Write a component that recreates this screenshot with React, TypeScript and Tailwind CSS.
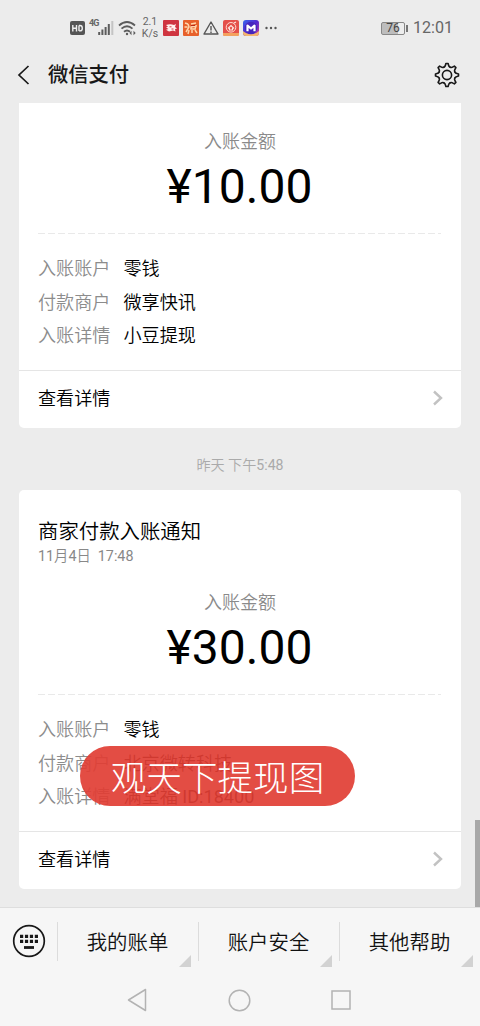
import React from "react";

type Row = { label: string; value: string; code?: string };

function StatusBar() {
  return (
    <div className="flex h-[52px] shrink-0 items-center pl-[70px] pr-[27px] text-[#666]">
      <svg className="mt-1 h-[14px] w-[15px]" viewBox="0 0 15 14">
        <rect width="15" height="14" rx="2" fill="#555" />
        <path d="M2.800 4v6.500M2.800 7.200h3.700M6.500 4v6.500M9 4.500v5.400M9 4.500h1q2.300 0 2.300 2.700t-2.300 2.700H9" fill="none" stroke="#eee" strokeWidth="1.400" />
      </svg>
      <span className="mb-[5px] ml-[4px] w-[9px] text-[9px] font-bold leading-none tracking-[-0.8px]">4G</span>
      <svg className="mt-1 h-[16px] w-[16px]" viewBox="0 0 16 16">
        <path d="M1.200 15v-3M4.400 15V9.500M7.600 15V7M10.800 15V4" stroke="#5c5c5c" strokeWidth="2" />
        <path d="M14.300 15V1" stroke="#c4c4c4" strokeWidth="2" />
      </svg>
      <svg className="ml-[4px] mt-1 h-[16px] w-[20px]" viewBox="0 0 20 16" fill="none" stroke="#5c5c5c" strokeWidth="1.800">
        <path d="M1 5.500q8-7 16 0M3.500 8.700q5.500-5 11 0M6 11.800q3-2.600 6 0" />
        <circle cx="9" cy="14" r="1.200" fill="#5c5c5c" stroke="none" />
        <path d="M13.500 10.800l-2 2.200 2 2.200zM15.500 10.800l2.200 2.200-2.200 2.200z" fill="#5c5c5c" stroke="none" />
      </svg>
      <div className="ml-[3px] mt-[3px] w-[18px] whitespace-nowrap text-center text-[10.5px] leading-[12px]">
        <div>2.1</div>
        <div>K/s</div>
      </div>
      <svg className="ml-[4px] mt-1 h-[16px] w-[16px]" viewBox="0 0 16 16">
        <rect width="16" height="16" rx="1" fill="#cf3540" />
        <path d="M3 5q4-1.500 8 0l2-1-1 3 2 1.500-2 .5.500 2.500-2.500-1-4 1L3 9.800l2.500-.8L3 7.500l2-.8z" fill="#fff1ed" />
        <path d="M6.500 6.800h2M8.500 9h2" stroke="#cf3540" />
      </svg>
      <svg className="ml-[4px] mt-1 h-[16px] w-[16px]" viewBox="0 0 16 16">
        <rect width="16" height="16" rx="1" fill="#e7602b" />
        <path d="M2 3l3 1M1.500 7h3M5 4l1 3-3 5M8 4l5-1M8 7l5-1-1 3H8zM6 10l-1 4M9 10v3M12 10l2 3" fill="none" stroke="#ffd5aa" strokeWidth="1.500" />
        <path d="M8 5.500h4" stroke="#b52b19" />
      </svg>
      <svg className="ml-[4px] mt-1 h-[16px] w-[16px]" viewBox="0 0 16 16" fill="none" stroke="#555" strokeWidth="1.400" strokeLinejoin="round">
        <path d="M8 2L15 14H1zM8 6v4.500M8 11.500V13" />
      </svg>
      <svg className="ml-[4px] mt-1 h-[16px] w-[16px]" viewBox="0 0 16 16">
        <rect width="16" height="16" rx="2" fill="#e4504b" />
        <path d="M0 13h16v1.500q0 1.500-1.500 1.500h-13Q0 16 0 14.500z" fill="#f3a15e" />
        <circle cx="8" cy="7.300" r="4.800" fill="none" stroke="#ffd9d0" strokeWidth="1" />
        <path d="M5 8.500l3-3 3 3M6.500 8v2h3V8M11 3l2-1" fill="none" stroke="#ffe8e2" strokeWidth="1.100" />
      </svg>
      <svg className="ml-[4px] mt-1 h-[16px] w-[16px]" viewBox="0 0 16 16">
        <defs>
          <linearGradient id="badge" x1="0" x2="1" y1="0" y2="1">
            <stop offset="0" stopColor="#3867ed" />
            <stop offset="0.5" stopColor="#5428cf" />
            <stop offset="1" stopColor="#d04398" />
          </linearGradient>
        </defs>
        <rect width="16" height="16" rx="3" fill="url(#badge)" />
        <path d="M0 11q3 3 8 3t8-3v2q0 3-3 3H3q-3 0-3-3z" fill="#f4b66d" />
        <circle cx="8" cy="8" r="6.300" fill="#4527bd" />
        <path d="M4.500 11.300V5.600L8 8.500l3.500-2.900v5.700" fill="none" stroke="#fff" strokeWidth="2.200" strokeLinejoin="round" />
      </svg>
      <svg className="ml-[6px] mt-[3px] h-[4px] w-[12px]" viewBox="0 0 12 4" fill="#555">
        <circle cx="1.500" cy="2" r="1.200" /><circle cx="6" cy="2" r="1.200" /><circle cx="10.500" cy="2" r="1.200" />
      </svg>
      <div className="ml-auto mt-[4px] flex items-center">
        <div className="flex h-[13px] w-[24px] items-center justify-center rounded-[2px] border border-[#888] bg-gradient-to-r from-[#bdbdbd] from-75% to-[#eee] to-75% text-[12px] leading-none text-[#444]">76</div>
        <div className="ml-px h-[7px] w-[2px] bg-[#777]" />
        <span className="ml-[5px] pt-px text-[16.100px] leading-none">12:01</span>
      </div>
    </div>
  );
}

function Gear() {
  return (
    <svg className="h-[26px] w-[26px]" viewBox="0 0 26 26" fill="none" stroke="#181818" strokeWidth="1.600" strokeLinejoin="round">
      {/* One tooth and the valley beside it, repeated around the hub. */}
      {[0, 45, 90, 135, 180, 225, 270, 315].map((angle) => (
        <path
          key={angle}
          d="M9.800 5.270Q11.200 4.600 11.500 3L11.900 1.500H14.100L14.500 3Q14.800 4.600 16.200 5.270"
          strokeLinecap="round"
          transform={`rotate(${angle} 13 13)`}
        />
      ))}
      <circle cx="13" cy="13" r="4.600" />
    </svg>
  );
}

function Receipt({ amount, rows }: { amount: string; rows: Row[] }) {
  return (
    <>
      <div className="h-[25px] pt-px text-center text-[18px] font-[350] leading-[24px] text-[#8a8a8a]">入账金额</div>
      <div className="mt-[5px] h-[56px] pr-px text-center text-[48px] leading-[56px] text-black">{amount}</div>
      <svg className="mx-[19px] mt-[18px] block h-px w-[403px]" viewBox="0 0 403 1">
        <path d="M0 .5h403" stroke="#e9e9e9" strokeDasharray="7 3" />
      </svg>
      <div className="mt-[18px] h-[118px] px-[19px] text-[18.100px]">
        {rows.map((row) => (
          <div key={row.label} className="flex h-[33.5px] items-center pt-px leading-[24px]">
            <span className="w-[85.5px] font-[350] text-[#8c8c8c]">{row.label}</span>
            <span className="font-[350] text-black">
              {row.value}
              {row.code && <span className="font-normal"> {row.code}</span>}
            </span>
          </div>
        ))}
      </div>
      <div className="flex h-[58px] items-center justify-between border-t border-[#e5e5e5] pb-[3px] pl-[19px] pr-[17px] text-[18.100px] font-[350] text-black">
        <span className="pt-px">查看详情</span>
        <svg className="h-[16px] w-[12px]" viewBox="0 0 12 16" fill="none" stroke="#c2c2c2" strokeWidth="2.400">
          <path d="M2 1.500L9 8l-7 6.500" />
        </svg>
      </div>
    </>
  );
}

function MenuItem({ text }: { text: string }) {
  return (
    <div className="flex h-[66px] flex-1 items-center">
      <div className="h-[39px] w-px bg-[#dcdcdc]" />
      <span className="flex-1 pr-px pt-[4px] text-center text-[20.4px] font-[350] text-[#111]">{text}</span>
      <svg className="-ml-[19px] mr-[7px] mb-[7px] h-[12px] w-[12px] self-end" viewBox="0 0 12 12">
        <path d="M12 0v12H0z" fill="#d2d2d2" />
      </svg>
    </div>
  );
}

export default function App() {
  return (
    <div className="relative flex h-[1026px] w-[480px] flex-col overflow-hidden bg-[#ececec] font-['Roboto','Noto_Sans_CJK_SC',sans-serif]">
      <StatusBar />
      <header className="flex h-[51px] shrink-0 items-center pb-[6px] pl-[17px] pr-[20px]">
        <svg className="h-[20px] w-[13px]" viewBox="0 0 13 20" fill="none" stroke="#181818" strokeWidth="1.700">
          <path d="M11.500 1L2 10l9.500 9" />
        </svg>
        <h1 className="ml-[18px] pt-[2px] text-[20.300px] font-medium text-[#181818]">微信支付</h1>
        <div className="ml-auto"><Gear /></div>
      </header>

      <main className="h-[804px] shrink-0 px-[19px]">
        <section className="h-[325px] rounded-b-[5px] bg-white pt-[26px]">
          <Receipt
            amount="¥10.00"
            rows={[
              { label: "入账账户", value: "零钱" },
              { label: "付款商户", value: "微享快讯" },
              { label: "入账详情", value: "小豆提现" },
            ]}
          />
        </section>
        <div className="flex h-[62px] items-center justify-center whitespace-pre pt-[13px] text-[14.100px] font-[350] text-[#aaa]">
          昨天 下午<span className="font-normal">5:48</span>
        </div>
        <section className="h-[399px] rounded-[5px] bg-white pt-[27px]">
          <h2 className="h-[30px] pl-[19px] text-[20.400px] font-[350] leading-[30px] text-black">商家付款入账通知</h2>
          <div className="mb-[23px] h-[20px] whitespace-pre pl-[19px] text-[14.300px] leading-[19px] text-[#888]">
            11<span className="font-[350]">月</span>4<span className="font-[350]">日</span>{"  "}17:48
          </div>
          <Receipt
            amount="¥30.00"
            rows={[
              { label: "入账账户", value: "零钱" },
              { label: "付款商户", value: "北京微转科技" },
              { label: "入账详情", value: "满堂福", code: "ID:18400" },
            ]}
          />
        </section>
      </main>

      <footer className="h-[119px] shrink-0 border-t border-[#dedede] bg-[#f6f6f6]">
        <div className="flex h-[66px] items-center">
          <div className="flex w-[57px] shrink-0 justify-center">
            <svg className="h-[34px] w-[34px]" viewBox="0 0 34 34">
              <circle cx="17" cy="17" r="15.300" fill="none" stroke="#181818" strokeWidth="1.700" />
              <path d="M8 12.300h18M8 17.300h18" stroke="#181818" strokeWidth="3.200" strokeDasharray="3.200 1.730" />
              <path d="M12 23.500h10" stroke="#181818" strokeWidth="2.800" />
            </svg>
          </div>
          <MenuItem text="我的账单" />
          <MenuItem text="账户安全" />
          <MenuItem text="其他帮助" />
        </div>
        <div className="flex items-center gap-[80px] pl-[127px] pt-[14px]">
          <svg className="h-[24px] w-[21px]" viewBox="0 0 21 24" fill="none" stroke="#b3b3b3" strokeWidth="1.500" strokeLinejoin="round">
            <path d="M18.500 1.500v21L1.500 12z" />
          </svg>
          <svg className="h-[23px] w-[23px]" viewBox="0 0 23 23">
            <circle cx="11.500" cy="11.500" r="10.300" fill="none" stroke="#b3b3b3" strokeWidth="1.500" />
          </svg>
          <svg className="h-[20px] w-[20px]" viewBox="0 0 20 20">
            <rect x="1" y="1" width="18" height="18" fill="none" stroke="#b3b3b3" strokeWidth="1.500" />
          </svg>
        </div>
      </footer>

      <div className="absolute left-[475px] top-[820px] h-[87px] w-[5px] bg-[#a8a8a8]" />
      <div className="absolute left-[80px] top-[746px] flex h-[60px] w-[275px] items-center justify-center rounded-full bg-[#e13e34]/92 pt-[7px] text-[35.600px] font-light text-white">
        观天下提现图
      </div>
    </div>
  );
}
